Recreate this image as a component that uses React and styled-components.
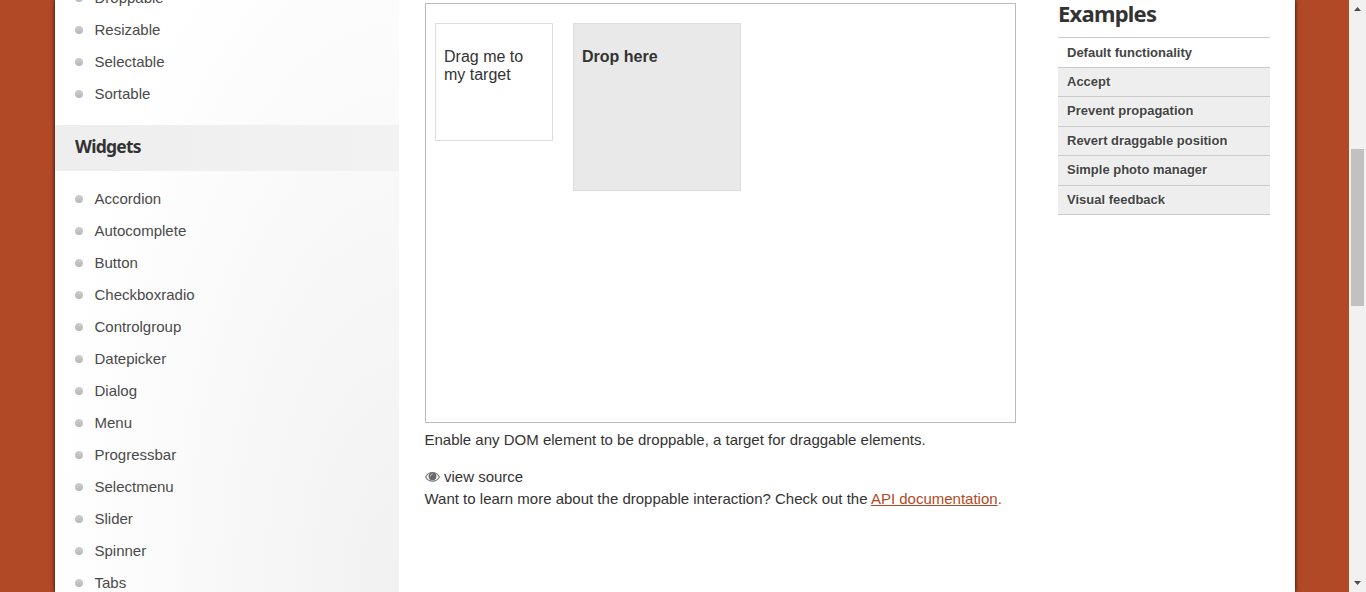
import React from "react";
import styled, { createGlobalStyle, css } from "styled-components";

const Global = createGlobalStyle`
  * { box-sizing: border-box; }
  html, body { margin: 0; height: 592px; overflow: hidden; }
  body {
    background: #b24926;
    color: #333;
    font: 15px/22px "Liberation Sans", Arial, sans-serif;
  }
`;

const Screen = styled.div`
  display: flex;
  height: 592px;
  width: 1366px;
  overflow: hidden;
`;

const Page = styled.div`
  display: flex;
  width: 1240px;
  margin: 0 54px 0 55px;
  background: #fff;
  box-shadow: 0 0 4px rgba(0, 0, 0, 0.9);
`;

const Sidebar = styled.aside`
  width: 344px;
  overflow: hidden;
  background: radial-gradient(ellipse 345px 760px at 100% 100%, #f1f1f1, #fff);
`;

const List = styled.ul`
  list-style: none;
  margin: 0;
  padding: 12px 20px 15px;
  ${(p) => p.$clipped && css`margin-top: -30px;`}
`;

const Item = styled.li`
  display: flex;
  align-items: center;
  height: 32px;
  gap: 11.5px;
  color: #4a4a4a;
  &::before {
    content: "";
    width: 8px;
    height: 8px;
    border-radius: 50%;
    background: linear-gradient(#d0d0d0, #b6b6b6);
  }
`;

const SectionTitle = styled.h3`
  margin: 0;
  height: 46px;
  padding-left: 20px;
  font: bold 17.5px/43px "Noto Sans", "Open Sans", sans-serif;
  letter-spacing: -0.75px;
  background: linear-gradient(90deg, #eee, #f2f2f2);
`;

const Content = styled.main`
  width: 591px;
  margin-left: 26px;
  padding-top: 3px;
`;

const Demo = styled.div`
  display: flex;
  align-items: flex-start;
  gap: 20px;
  height: 420px;
  padding: 19px 9px;
  border: 1px solid #bbb;
`;

const Box = styled.div`
  width: ${(p) => p.$size}px;
  height: ${(p) => p.$size}px;
  padding: 24px 8px;
  border: 1px solid #ddd;
  font-size: 16px;
  line-height: 18px;
  ${(p) => p.$target && css`background: #e9e9e9; font-weight: bold;`}
`;

const Text = styled.p`
  margin: 0 0 0 -0.5px;
  white-space: nowrap;
`;

const Description = styled(Text)`
  margin: 6px 0 15px -0.5px;
`;

const ViewSource = styled.div`
  display: flex;
  align-items: center;
  gap: 4px;
  svg { display: block; }
`;

const Link = styled.a`
  color: #b24926;
  text-decoration: underline;
`;

const Dot = styled.span`
  color: #b24926;
`;

const Examples = styled.aside`
  width: 212px;
  margin-left: 42px;
`;

const ExamplesTitle = styled.h2`
  margin: 0;
  height: 37px;
  padding-top: 1px;
  font: bold 22px/25px "Noto Sans", "Open Sans", sans-serif;
  letter-spacing: -0.75px;
`;

const ExampleList = styled.ul`
  list-style: none;
  margin: 0;
  padding: 0;
  border-bottom: 1px solid #ccc;
`;

const Example = styled.li`
  height: 29.5px;
  padding-left: 9px;
  border-top: 1px solid #ccc;
  font-size: 13px;
  font-weight: bold;
  line-height: ${(p) => (p.$active ? "29px" : "28px")};
  color: #444;
  background: ${(p) => (p.$active ? "#fff" : "#eee")};
  text-shadow: 1px 1px 0 #fff;
`;

const Scrollbar = styled.div`
  display: flex;
  flex-direction: column;
  align-items: center;
  width: 17px;
  background: #f1f1f1;
  position: relative;
`;

const Thumb = styled.div`
  width: 13px;
  height: 157px;
  margin: 138px 0 auto;
  background: #c1c1c1;
`;

const Arrow = styled.svg`
  display: block;
  margin: ${(p) => (p.$down ? "0 0 7px" : "7px 0 0")};
  fill: #505050;
`;

const interactions = ["Droppable", "Resizable", "Selectable", "Sortable"];
const widgets = [
  "Accordion", "Autocomplete", "Button", "Checkboxradio", "Controlgroup", "Datepicker", "Dialog",
  "Menu", "Progressbar", "Selectmenu", "Slider", "Spinner", "Tabs",
];
const examples = [
  "Default functionality", "Accept", "Prevent propagation", "Revert draggable position",
  "Simple photo manager", "Visual feedback",
];

const Eye = () => (
  <svg width="15" height="12" viewBox="0 0 15 12">
    <path d="M0.6 6C3.6 -0.1 11.4 -0.1 14.4 6C11.4 11.5 3.6 11.5 0.6 6Z" fill="#fff" stroke="#777" strokeWidth="1.1" />
    <circle cx="7.5" cy="5.3" r="3.9" fill="#686868" />
    <path d="M5.2 5.1Q5.3 3 7.5 2.9" fill="none" stroke="#ccc" strokeWidth="0.9" strokeLinecap="round" />
  </svg>
);

export default function App() {
  return (
    <>
      <Global />
      <Screen>
        <Page>
          <Sidebar>
            <List $clipped>
              {interactions.map((name) => <Item key={name}>{name}</Item>)}
            </List>
            <SectionTitle>Widgets</SectionTitle>
            <List>
              {widgets.map((name) => <Item key={name}>{name}</Item>)}
            </List>
          </Sidebar>
          <Content>
            <Demo>
              <Box $size={118}>Drag me to my target</Box>
              <Box $size={168} $target>Drop here</Box>
            </Demo>
            <Description>Enable any DOM element to be droppable, a target for draggable elements.</Description>
            <ViewSource><Eye />view source</ViewSource>
            <Text>
              Want to learn more about the droppable interaction? Check out the <Link>API documentation</Link><Dot>.</Dot>
            </Text>
          </Content>
          <Examples>
            <ExamplesTitle>Examples</ExamplesTitle>
            <ExampleList>
              {examples.map((name, i) => <Example key={name} $active={i === 0}>{name}</Example>)}
            </ExampleList>
          </Examples>
        </Page>
        <Scrollbar>
          <Arrow width="7" height="4" viewBox="0 0 7 4"><path d="M0 4L3.5 0L7 4Z" /></Arrow>
          <Thumb />
          <Arrow $down width="7" height="4" viewBox="0 0 7 4"><path d="M0 0L3.5 4L7 0Z" /></Arrow>
        </Scrollbar>
      </Screen>
    </>
  );
}
